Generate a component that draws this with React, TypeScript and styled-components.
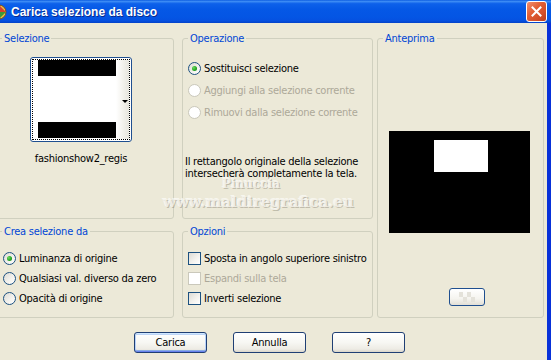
import React from 'react';
import styled, { createGlobalStyle, css } from 'styled-components';

const FONT = `"DejaVu Sans Condensed", "Liberation Sans", Tahoma, sans-serif`;

const Global = createGlobalStyle`
  html, body { margin: 0; padding: 0; background: #ECE9D8; }
  body { width: 551px; height: 360px; overflow: hidden; }
  * { box-sizing: border-box; }
`;

const Window = styled.div`
  position: relative;
  width: 551px;
  height: 360px;
  overflow: hidden;
  display: flex;
  flex-direction: column;
  background: #ECE9D8;
  font-family: ${FONT};
  font-size: 11px;
  letter-spacing: -0.25px;
  color: #000;
`;

const TitleBar = styled.div`
  flex: none;
  height: 23px;
  display: flex;
  align-items: center;
  padding-right: 4px;
  overflow: hidden;
  background: linear-gradient(
    to bottom,
    #0A5BE0 0%,
    #3D8CF5 6%,
    #0D61EA 16%,
    #0558E6 40%,
    #0455E4 75%,
    #0550E0 90%,
    #0343C8 100%
  );
`;

const TitleIcon = styled.svg`
  flex: none;
  margin-left: -9px;
  margin-right: 4px;
`;

const TitleText = styled.span`
  font-family: "Liberation Sans", Arial, sans-serif;
  font-weight: bold;
  font-size: 12px;
  letter-spacing: 0;
  color: #fff;
  text-shadow: 1px 1px 0 #0B2A8C;
`;

const CloseButton = styled.div`
  margin-left: auto;
  width: 21px;
  height: 21px;
  border: 1px solid #fff;
  border-radius: 3px;
  background: linear-gradient(135deg, #F09070 0%, #E25F35 40%, #D4502A 70%, #B93E1C 100%);
  display: flex;
  align-items: center;
  justify-content: center;
`;

const Body = styled.div`
  flex: 1;
  display: flex;
  flex-direction: column;
  border-right: 4px solid #0831D9;
`;

const Groups = styled.div`
  display: flex;
  margin-left: -4px;
  padding-top: 9px;
  height: 295px;
`;

const Column = styled.div<{ $w: number; $ml?: number }>`
  width: ${p => p.$w}px;
  margin-left: ${p => p.$ml ?? 0}px;
  display: flex;
  flex-direction: column;
  gap: 6px;
`;

const Group = styled.fieldset<{ $h: number }>`
  margin: 0;
  padding: 0;
  min-width: 0;
  height: ${p => p.$h}px;
  border: 1px solid #D0D0BF;
  border-radius: 3px;
`;

const Legend = styled.legend`
  margin-left: 5px;
  padding: 0 2px;
  line-height: 13px;
  font-size: 11px;
  color: #0046D5;
`;

const GroupBody = styled.div<{ $pt: number; $pl: number }>`
  padding-top: ${p => p.$pt}px;
  padding-left: ${p => p.$pl}px;
  display: flex;
  flex-direction: column;
`;

const ThumbWrap = styled.div`
  width: 102px;
  display: flex;
  flex-direction: column;
  align-items: center;
`;

const Thumb = styled.div`
  width: 102px;
  height: 85px;
  border: 1px solid #1F4F8F;
  border-radius: 3px;
  background: #fff;
  padding: 1px;
`;

const ThumbFocus = styled.div`
  height: 100%;
  border: 1px dotted #000;
  display: flex;
`;

const ThumbImage = styled.div`
  margin-left: 5px;
  width: 78px;
  display: flex;
  flex-direction: column;
`;

const Bar = styled.div<{ $h: number; $c: string }>`
  height: ${p => p.$h}px;
  background: ${p => p.$c};
  flex: none;
`;

const ThumbStrip = styled.div`
  flex: 1;
  display: flex;
  align-items: center;
  justify-content: flex-end;
  padding-right: 1px;
  padding-top: 4px;
  background: linear-gradient(to right, #FFFFFF, #F1F0EA 60%, #E6E5DD);
`;

const Arrow = styled.div`
  width: 0;
  height: 0;
  border-left: 3px solid transparent;
  border-right: 3px solid transparent;
  border-top: 3px solid #000;
`;

const ThumbLabel = styled.div`
  margin-top: 10px;
  line-height: 13px;
  white-space: nowrap;
`;

const OptionList = styled.div<{ $gap: number; $rowH: number }>`
  display: flex;
  flex-direction: column;
  gap: ${p => p.$gap}px;
  & > * { height: ${p => p.$rowH}px; }
`;

const Option = styled.label<{ $disabled?: boolean }>`
  display: flex;
  align-items: center;
  gap: 3px;
  white-space: nowrap;
  line-height: 13px;
  color: ${p => (p.$disabled ? '#ACA899' : '#000')};
`;

const Radio = styled.span<{ $disabled?: boolean; $checked?: boolean }>`
  flex: none;
  width: 13px;
  height: 13px;
  border-radius: 50%;
  display: flex;
  align-items: center;
  justify-content: center;
  ${p =>
    p.$disabled
      ? css`
          border: 1px solid #CAC8BB;
          background: #fff;
        `
      : css`
          border: 1px solid #1C5180;
          background: linear-gradient(135deg, #DCDBD5 0%, #F4F3EF 60%, #FFFFFF 100%);
        `}
  &::after {
    content: '';
    display: ${p => (p.$checked ? 'block' : 'none')};
    width: 5px;
    height: 5px;
    border-radius: 50%;
    background: radial-gradient(circle at 35% 35%, #6BDB5E 0%, #21A121 60%, #118A11 100%);
  }
`;

const Check = styled.span<{ $disabled?: boolean }>`
  flex: none;
  width: 13px;
  height: 13px;
  ${p =>
    p.$disabled
      ? css`
          border: 1px solid #CAC8BB;
          background: #fff;
        `
      : css`
          border: 1px solid #1C5180;
          background: linear-gradient(135deg, #DCDBD5 0%, #F4F3EF 60%, #FFFFFF 100%);
        `}
`;

const Note = styled.p`
  margin: 37px 0 0 -3px;
  line-height: 12px;
  white-space: nowrap;
`;

const Preview = styled.svg`
  display: block;
  flex: none;
`;

const ZoomButton = styled.div`
  margin-top: 55px;
  margin-left: 60px;
  width: 36px;
  height: 18px;
  border: 1px solid #1F4F8F;
  border-radius: 3px;
  background: linear-gradient(to bottom, #FFFFFF 0%, #F5F4EF 60%, #E2DFD6 100%);
  display: flex;
  align-items: center;
  justify-content: center;
`;

const ButtonRow = styled.div`
  display: flex;
  gap: 26px;
  padding-left: 134px;
  margin-top: 14px;
`;

const Button = styled.div<{ $default?: boolean }>`
  width: 73px;
  height: 21px;
  border: 1px solid #1F3F74;
  border-radius: 3px;
  display: flex;
  align-items: center;
  justify-content: center;
  font-size: 11px;
  background: linear-gradient(to bottom, #FFFFFF 0%, #F7F7F3 50%, #EDEBE4 85%, #D9D5C9 100%);
  ${p =>
    p.$default &&
    css`
      box-shadow: inset 0 1px 0 #CEE7FF, inset 0 -1px 0 #6982EE, inset 1px 0 0 #B8D2F9,
        inset -1px 0 0 #B8D2F9, inset 0 2px 0 #BCD4F6, inset 0 -2px 0 #89ADE4;
    `}
`;

const Watermark = styled.div<{ $x: number; $y: number; $size: number }>`
  position: absolute;
  left: ${p => p.$x}px;
  top: ${p => p.$y}px;
  font-family: "DejaVu Serif", "Liberation Serif", serif;
  font-weight: bold;
  font-size: ${p => p.$size}px;
  letter-spacing: 0;
  line-height: 1;
  white-space: nowrap;
  color: rgba(245, 243, 236, 0.85);
  text-shadow: 1px 1px 0 rgba(120, 115, 100, 0.4), -1px -1px 0 rgba(255, 255, 255, 0.6);
  pointer-events: none;
`;

export default function App() {
  return (
    <>
      <Global />
      <Window>
        <TitleBar>
          <TitleIcon width="16" height="16" viewBox="0 0 16 16">
            <circle cx="8" cy="8" r="7" fill="#E8C04A" stroke="#7A4A1A" strokeWidth="1" />
            <path d="M8 1 L15 8 L8 8 Z" fill="#D8402A" />
            <path d="M8 8 L15 8 L8 15 Z" fill="#3A9A3A" />
            <path d="M1 8 L8 8 L8 15 Z" fill="#3A6AD0" />
          </TitleIcon>
          <TitleText>Carica selezione da disco</TitleText>
          <CloseButton>
            <svg width="11" height="11" viewBox="0 0 11 11">
              <path d="M1.5 1.5 L9.5 9.5 M9.5 1.5 L1.5 9.5" stroke="#fff" strokeWidth="2" strokeLinecap="square" />
            </svg>
          </CloseButton>
        </TitleBar>
        <Body>
          <Groups>
            <Column $w={178}>
              <Group $h={187}>
                <Legend>Selezione</Legend>
                <GroupBody $pt={12} $pl={33}>
                  <ThumbWrap>
                    <Thumb>
                      <ThumbFocus>
                        <ThumbImage>
                          <Bar $h={16} $c="#000" />
                          <Bar $h={46} $c="#fff" />
                          <Bar $h={16} $c="#000" />
                        </ThumbImage>
                        <ThumbStrip>
                          <Arrow />
                        </ThumbStrip>
                      </ThumbFocus>
                    </Thumb>
                    <ThumbLabel>fashionshow2_regis</ThumbLabel>
                  </ThumbWrap>
                </GroupBody>
              </Group>
              <Group $h={93}>
                <Legend>Crea selezione da</Legend>
                <GroupBody $pt={10} $pl={6}>
                  <OptionList $gap={0} $rowH={20}>
                    <Option>
                      <Radio $checked />
                      Luminanza di origine
                    </Option>
                    <Option>
                      <Radio />
                      Qualsiasi val. diverso da zero
                    </Option>
                    <Option>
                      <Radio />
                      Opacità di origine
                    </Option>
                  </OptionList>
                </GroupBody>
              </Group>
            </Column>
            <Column $w={191} $ml={8}>
              <Group $h={187}>
                <Legend>Operazione</Legend>
                <GroupBody $pt={17} $pl={5}>
                  <OptionList $gap={9} $rowH={13}>
                    <Option>
                      <Radio $checked />
                      Sostituisci selezione
                    </Option>
                    <Option $disabled>
                      <Radio $disabled />
                      Aggiungi alla selezione corrente
                    </Option>
                    <Option $disabled>
                      <Radio $disabled />
                      Rimuovi dalla selezione corrente
                    </Option>
                  </OptionList>
                  <Note>
                    Il rettangolo originale della selezione
                    <br />
                    intersecherà completamente la tela.
                  </Note>
                </GroupBody>
              </Group>
              <Group $h={93}>
                <Legend>Opzioni</Legend>
                <GroupBody $pt={10} $pl={5}>
                  <OptionList $gap={0} $rowH={20}>
                    <Option>
                      <Check />
                      Sposta in angolo superiore sinistro
                    </Option>
                    <Option $disabled>
                      <Check $disabled />
                      Espandi sulla tela
                    </Option>
                    <Option>
                      <Check />
                      Inverti selezione
                    </Option>
                  </OptionList>
                </GroupBody>
              </Group>
            </Column>
            <Column $w={167} $ml={4}>
              <Group $h={286}>
                <Legend>Anteprima</Legend>
                <GroupBody $pt={86} $pl={11}>
                  <Preview width="141" height="102" viewBox="0 0 141 102">
                    <rect x="0" y="0" width="141" height="102" fill="#000" />
                    <rect x="45" y="9" width="54" height="32" fill="#fff" />
                  </Preview>
                  <ZoomButton>
                    <svg width="16" height="10" viewBox="0 0 16 10">
                      <rect x="0" y="0" width="4" height="5" fill="#E4E2DA" />
                      <rect x="8" y="0" width="4" height="5" fill="#E4E2DA" />
                      <rect x="4" y="5" width="4" height="5" fill="#E4E2DA" />
                      <rect x="12" y="5" width="4" height="5" fill="#E4E2DA" />
                    </svg>
                  </ZoomButton>
                </GroupBody>
              </Group>
            </Column>
          </Groups>
          <ButtonRow>
            <Button $default>Carica</Button>
            <Button>Annulla</Button>
            <Button>?</Button>
          </ButtonRow>
        </Body>
        <Watermark $x={222} $y={178} $size={12}>Pinuccia</Watermark>
        <Watermark $x={163} $y={195} $size={15}>www.maldiregrafica.eu</Watermark>
      </Window>
    </>
  );
}
